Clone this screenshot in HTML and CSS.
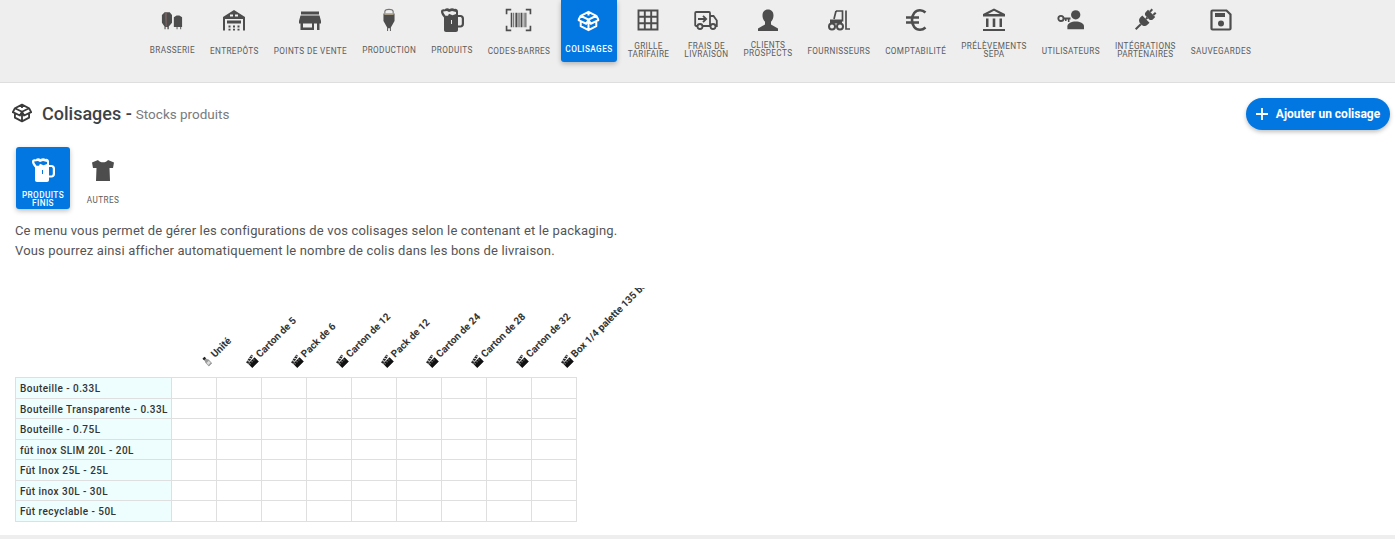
FILE: index.html
```html
<!DOCTYPE html>
<html lang="fr">
<head>
<meta charset="utf-8">
<title>Colisages</title>
<link rel="stylesheet" href="styles.css">
</head>
<body>
<svg class="defs" width="0" height="0" aria-hidden="true">
  <defs>
    <symbol id="i-box" viewBox="0 0 24 24"><path fill="none" stroke="currentColor" stroke-width="2.200" stroke-linejoin="round" d="M12 2 20.500 6.300 23 11 20.500 12.200V17.600L12 22 3.500 17.600V12.200L1 11 3.500 6.300ZM3.500 6.300 12 10.500 20.500 6.300M12 10.500V22M12 2V6M3.500 12.200 9.500 15 12 10.500 14.500 15 20.500 12.200"/></symbol>
    <symbol id="i-mug" viewBox="0 0 24 24"><path fill="currentColor" fill-rule="evenodd" d="M1 3.500C1 1.500 3 1 4.500 1.500 6 0 8 0 9.500 1 11-.2 13.500 0 14.500 1 16 .5 18 1.500 18 3.500V7h2.500C22.500 7 24 8.500 24 10.500V16c0 2-1.500 3.500-3.500 3.500H18V22c0 1-.8 2-2 2H6c-1.200 0-2-1-2-2V9.500L2.800 8C1.800 6.800 1 5 1 3.500ZM18 9v8.500h2c1 0 1.800-.8 1.800-1.800v-5c0-1-.8-1.700-1.800-1.700ZM3.200 3.500 3.600 5 5.500 7.800H8L9 5.800 12.500 7.200 16 6V4L12 3 9 4 7 3ZM11 12h1v4h-1Z"/></symbol>
    <symbol id="i-clap" viewBox="0 0 12 12"><path fill="#111" d="M1 5h10v6.500H1z"/><path fill="#222" d="M.5 2.300 10.500.3 11 3 1 5z"/><path fill="#eee" d="M2.500 2 3.700 4.400 4.700 4.200 3.500 1.800zM5.500 1.400 6.700 3.800 7.700 3.600 6.500 1.200zM8.500.8 9.700 3.200 10.500 3 9.400.6z"/><path fill="#eee" d="M2 6h1v1H2zM5 6h1v1H5zM8 6h1v1H8z"/></symbol>
    <symbol id="i-bottle" viewBox="0 0 12 12"><path fill="#999" d="M7.500.5h-3v3.500L3.500 6v5.500h5V6L7.500 4z"/><path fill="#222" d="M4.500 .5h3V3h-3z"/><path fill="#ddd" d="M4.300 7h3.400v3H4.300z"/></symbol>
  </defs>
</svg>

<header class="topbar">
  <nav class="nav">
    <a class="nav-item nudge"><svg class="ico ico-sm" viewBox="0 0 24 24"><path fill="currentColor" d="M1 6.500 4 3.500h5.500l2.500 3V15l-3.500 4v3H7v-2.500H5V22H3.800v-3L1 15Z"/><path fill="#8a6d6d" d="M4 3.500h2.500V19H5Z" opacity=".6"/><path fill="currentColor" d="M14 9l3-2 3 0 3 2v10.500h-1V22h-1v-2.500h-3V22h-1v-2.500h-3Z"/></svg><span class="lbl">Brasserie</span></a>
    <a class="nav-item"><svg class="ico" viewBox="0 0 24 24"><path fill="currentColor" fill-rule="evenodd" d="M1 9 12 2l11 7v13.500h-2V11H3v11.500H1ZM8 6.500v2h3v-2ZM13 6.500v2h3v-2ZM5 12.500h14v3H5ZM6.500 17.500h2v2h-2ZM11 17.500h2v2h-2ZM15.500 17.500h2v2h-2ZM6.500 20.800h2v1.700h-2ZM11 20.800h2v1.700h-2ZM15.500 20.800h2v1.700h-2Z"/></svg><span class="lbl">Entrepôts</span></a>
    <a class="nav-item"><svg class="ico" viewBox="0 0 24 24"><path fill="currentColor" d="M3 3.500h18v3H3ZM2.500 7.500h19L23 13v2.500h-1.500V22H2.500v-6.500H1V13ZM5 15.500V19.500h9v-4Z M16 15.500V22h3v-6.500Z" fill-rule="evenodd"/></svg><span class="lbl">Points de vente</span></a>
    <a class="nav-item nudge"><svg class="ico ico-tall" viewBox="0 0 16 26"><path fill="none" stroke="#777" stroke-width="1.200" d="M3.500 6V3.500C4 2 6 1.500 8 1.500s4 .5 4.500 2V6"/><path fill="currentColor" d="M2 6h12v8l-4 7v4H9v-3H7v3H6v-4l-4-7Z"/><path fill="#d8c8a8" d="M3 6h10v1.200H3Z"/></svg><span class="lbl">Production</span></a>
    <a class="nav-item nudge"><svg class="ico ico-mug" viewBox="0 0 24 24"><use href="#i-mug"/></svg><span class="lbl">Produits</span></a>
    <a class="nav-item"><svg class="ico ico-wide" viewBox="0 0 26 22"><path fill="none" stroke="currentColor" stroke-width="1.600" d="M6 1H1.500v4.500M20 1h4.500v4.500M6 21H1.500v-4.500M20 21h4.500v-4.500"/><path fill="currentColor" d="M5.500 4h1.500v14H5.500ZM8 4h.8v14H8ZM10 4h2v14h-2ZM13 4h1v14h-1ZM15 4h1.800v14H15ZM18 4h.8v14H18ZM19.600 4h1v14h-1Z"/></svg><span class="lbl">Codes-barres</span></a>
    <a class="nav-item active"><svg class="ico ico-box" viewBox="0 0 24 24"><use href="#i-box"/></svg><span class="lbl">Colisages</span></a>
    <a class="nav-item"><svg class="ico" viewBox="0 0 24 24"><path fill="none" stroke="currentColor" stroke-width="1.900" d="M2.500 2.500h19v19h-19ZM2.500 8.800h19M2.500 15.200h19M8.800 2.500v19M15.200 2.500v19"/></svg><span class="lbl lbl-2">Grille<br>tarifaire</span></a>
    <a class="nav-item"><svg class="ico" viewBox="0 0 24 24"><path fill="none" stroke="currentColor" stroke-width="1.800" d="M3.500 18H2.200c-.6 0-1-.4-1-1V5c0-.6.400-1 1-1H15c.6 0 1 .4 1 1v13H8.500M16 8h3.500l3.300 4.500V18h-1.300M16 18h1"/><circle cx="6" cy="18.500" r="2.500" fill="none" stroke="currentColor" stroke-width="1.800"/><circle cx="19" cy="18.500" r="2.500" fill="none" stroke="currentColor" stroke-width="1.800"/><path fill="none" stroke="currentColor" stroke-width="1.800" d="M4 11h8M9 7.800 12.200 11 9 14.200"/></svg><span class="lbl lbl-2">Frais de<br>livraison</span></a>
    <a class="nav-item"><svg class="ico" viewBox="0 0 24 24"><path fill="currentColor" d="M12 1.500c3.500 0 5.500 2.500 5.500 6 0 2.500-1 4.800-2.500 6.200v2.800l7 4V23H2v-2.500l7-4v-2.800C7.500 12.300 6.500 10 6.500 7.500c0-3.500 2-6 5.500-6Z"/></svg><span class="lbl lbl-2 lbl-up">Clients<br>prospects</span></a>
    <a class="nav-item"><svg class="ico" viewBox="0 0 24 24"><path fill="none" stroke="currentColor" stroke-width="1.700" d="M19 2.500V21h4M9 3h6.500v10.500M9 3 7 11"/><path fill="currentColor" d="M3 11.500h12v4H3Z"/><circle cx="5" cy="18.500" r="3" fill="none" stroke="currentColor" stroke-width="2"/><circle cx="13" cy="18.500" r="3" fill="none" stroke="currentColor" stroke-width="2"/></svg><span class="lbl">Fournisseurs</span></a>
    <a class="nav-item"><svg class="ico" viewBox="0 0 24 24"><path fill="none" stroke="currentColor" stroke-width="2.600" d="M21.500 4.500C19.800 3 18 2.300 16 2.300c-4.800 0-8 4-8 9.700s3.200 9.700 8 9.700c2 0 3.800-.7 5.500-2.200M2 9.500h13M2 14.500h13"/></svg><span class="lbl">Comptabilité</span></a>
    <a class="nav-item"><svg class="ico" viewBox="0 0 24 24"><path fill="currentColor" fill-rule="evenodd" d="M12 .5 23 6v2.500H1V6ZM12 2.800 6 6h12ZM4 10.500h2.500v8.500H4ZM10.700 10.500h2.600v8.500h-2.600ZM17.500 10.500H20v8.500h-2.500ZM1 21h22v2H1Z"/></svg><span class="lbl lbl-2">Prélèvements<br>SEPA</span></a>
    <a class="nav-item"><svg class="ico ico-wide" viewBox="0 0 26 22"><circle cx="18" cy="6" r="4.500" fill="currentColor"/><path fill="currentColor" d="M10 20v-3c0-2.500 4-4.500 8-4.500s8 2 8 4.500v3Z"/><circle cx="3.800" cy="9.500" r="2.500" fill="none" stroke="currentColor" stroke-width="1.800"/><path fill="currentColor" d="M6 8.500h7v2h-1v2.500h-1.500v-2.500H9.200v1.500H7.700v-1.500H6Z"/></svg><span class="lbl">Utilisateurs</span></a>
    <a class="nav-item"><svg class="ico ico-plug" viewBox="0 0 24 24"><g fill="currentColor" transform="rotate(45 12 12) translate(12 12) scale(.85) translate(-12 -12)"><rect x="8" y="-3" width="2.400" height="4"/><rect x="13.600" y="-3" width="2.400" height="4"/><path d="M6 1h12v4c0 2-2 3-3 3H9C8 8 6 7 6 5Z"/><rect x="10.800" y="8" width="2.400" height="2.500"/><path d="M6 10.500h12V14c0 3-2.500 5-6 5s-6-2-6-5Z"/><rect x="10.800" y="19" width="2.400" height="8.500"/></g></svg><span class="lbl lbl-2">Intégrations<br>partenaires</span></a>
    <a class="nav-item"><svg class="ico" viewBox="0 0 24 24"><path fill="none" stroke="currentColor" stroke-width="2.200" d="M3.500 2.500h14l4 4v14c0 .6-.4 1-1 1h-17c-.6 0-1-.4-1-1v-17c0-.6.400-1 1-1Z"/><path fill="currentColor" d="M6 5h10v4H6Z"/><circle cx="12" cy="15.500" r="3" fill="currentColor"/></svg><span class="lbl">Sauvegardes</span></a>
  </nav>
</header>

<main class="main">
  <div class="title-row">
    <h1 class="title"><svg class="title-ico" viewBox="0 0 24 24"><use href="#i-box"/></svg><span class="title-main">Colisages -</span><span class="title-sub">Stocks produits</span></h1>
    <button class="add-btn"><svg class="plus" viewBox="0 0 12 12"><path fill="none" stroke="currentColor" stroke-width="1.800" d="M6 0v12M0 6h12"/></svg>Ajouter un colisage</button>
  </div>

  <div class="tabs">
    <a class="tab active"><svg class="tab-ico" viewBox="0 0 24 24"><use href="#i-mug"/></svg><span class="tab-lbl">Produits<br>finis</span></a>
    <a class="tab"><svg class="tab-ico" viewBox="0 0 24 24"><path fill="currentColor" d="M7 2 1 4.500 2 10h3.500L5 23h14l-.5-13H22l1-5.500L17 2c-1 1.500-3 2.300-5 2.300S8 3.500 7 2Z"/></svg><span class="tab-lbl">Autres</span></a>
  </div>

  <p class="intro">Ce menu vous permet de gérer les configurations de vos colisages selon le contenant et le packaging.<br>Vous pourrez ainsi afficher automatiquement le nombre de colis dans les bons de livraison.</p>

  <div class="table-wrap">
    <table class="grid">
      <thead>
        <tr>
          <th class="corner"></th>
          <th class="rot"><span><svg viewBox="0 0 12 12"><use href="#i-bottle"/></svg> Unité</span></th>
          <th class="rot"><span><svg viewBox="0 0 12 12"><use href="#i-clap"/></svg> Carton de 5</span></th>
          <th class="rot"><span><svg viewBox="0 0 12 12"><use href="#i-clap"/></svg> Pack de 6</span></th>
          <th class="rot"><span><svg viewBox="0 0 12 12"><use href="#i-clap"/></svg> Carton de 12</span></th>
          <th class="rot"><span><svg viewBox="0 0 12 12"><use href="#i-clap"/></svg> Pack de 12</span></th>
          <th class="rot"><span><svg viewBox="0 0 12 12"><use href="#i-clap"/></svg> Carton de 24</span></th>
          <th class="rot"><span><svg viewBox="0 0 12 12"><use href="#i-clap"/></svg> Carton de 28</span></th>
          <th class="rot"><span><svg viewBox="0 0 12 12"><use href="#i-clap"/></svg> Carton de 32</span></th>
          <th class="rot"><span><svg viewBox="0 0 12 12"><use href="#i-clap"/></svg> Box 1/4 palette 135 bouteilles</span></th>
        </tr>
      </thead>
      <tbody>
        <tr><th>Bouteille - 0.33L</th><td></td><td></td><td></td><td></td><td></td><td></td><td></td><td></td><td></td></tr>
        <tr><th>Bouteille Transparente - 0.33L</th><td></td><td></td><td></td><td></td><td></td><td></td><td></td><td></td><td></td></tr>
        <tr><th>Bouteille - 0.75L</th><td></td><td></td><td></td><td></td><td></td><td></td><td></td><td></td><td></td></tr>
        <tr><th>fût inox SLIM 20L - 20L</th><td></td><td></td><td></td><td></td><td></td><td></td><td></td><td></td><td></td></tr>
        <tr><th>Fût Inox 25L - 25L</th><td></td><td></td><td></td><td></td><td></td><td></td><td></td><td></td><td></td></tr>
        <tr><th>Fût inox 30L - 30L</th><td></td><td></td><td></td><td></td><td></td><td></td><td></td><td></td><td></td></tr>
        <tr><th>Fût recyclable - 50L</th><td></td><td></td><td></td><td></td><td></td><td></td><td></td><td></td><td></td></tr>
      </tbody>
    </table>
  </div>
</main>
<div class="foot"></div>
</body>
</html>
```
FILE: styles.css
```css
* { box-sizing: border-box; }
html, body { margin: 0; padding: 0; }
body {
  width: 1395px;
  height: 539px;
  overflow: hidden;
  background: #fff;
  font-family: Roboto, "Liberation Sans", sans-serif;
  color: #4d4d4d;
  display: flex;
  flex-direction: column;
}
.defs { position: absolute; }

.topbar {
  height: 83px;
  flex: none;
  background: #eeeeee;
  border-bottom: 1px solid #dedede;
}
.nav {
  display: flex;
  justify-content: center;
  align-items: flex-start;
  gap: 7px;
  margin-left: 6px;
}
.nav-item {
  height: 62px;
  padding: 8px 4px 0;
  display: flex;
  flex-direction: column;
  align-items: center;
  color: #4d4d4d;
  border-radius: 0 0 3px 3px;
}
.nav-item.active {
  background: #0277e2;
  color: #fff;
  box-shadow: 0 2px 5px rgba(0, 0, 0, .25);
}
.ico {
  width: 24px;
  height: 24px;
  flex: none;
  color: #4d4d4d;
}
.nav-item.active .ico { color: #fff; }
.ico-sm { width: 22px; }
.ico-tall { width: 16px; }
.ico-wide { width: 27px; }
.ico-box { width: 23px; height: 22px; margin: 2px 0 0; }
.lbl {
  margin-top: 9px;
  height: 20px;
  display: flex;
  align-items: center;
  justify-content: center;
  text-align: center;
  font-size: 8.2px;
  line-height: 8px;
  letter-spacing: .38px;
  text-transform: uppercase;
  color: #5c5c5c;
  white-space: nowrap;
}
.lbl-2 { margin-top: 8px; }
.nudge .lbl { margin-top: 8px; }
.lbl-up { margin-top: 7px; }
.active .lbl { color: #fff; font-weight: 500; letter-spacing: .45px; margin-top: 7px; }

.main { flex: 1; padding: 0 5px 0 15px; }
.title-row {
  display: flex;
  justify-content: space-between;
  align-items: center;
  margin: 15px 0 0 -3px;
  height: 32px;
}
.title { margin: 0 0 2px; display: flex; align-items: center; font-weight: 400; }
.title-ico { width: 20px; height: 20px; color: #3a3a3a; margin-right: 10px; }
.title-main { font-size: 18px; font-weight: 500; color: #3c4248; }
.title-sub { font-size: 13.5px; color: #777c80; margin-left: 4px; margin-top: 2px; }
.add-btn {
  height: 32px;
  width: 144px;
  border: 0;
  border-radius: 16px;
  background: #0277e2;
  color: #fff;
  font: 700 12px Roboto, sans-serif;
  display: flex;
  align-items: center;
  justify-content: center;
  gap: 8px;
  padding: 0;
  white-space: nowrap;
  box-shadow: 0 2px 4px rgba(0, 0, 0, .25);
}
.plus { width: 12px; height: 12px; }

.tabs { display: flex; gap: 6px; margin: 17px 0 0 1px; }
.tab {
  width: 54px;
  height: 62px;
  display: flex;
  flex-direction: column;
  align-items: center;
  padding-top: 11px;
  border-radius: 3px;
  color: #4d4d4d;
}
.tab.active { background: #0277e2; color: #fff; box-shadow: 0 2px 5px rgba(0, 0, 0, .25); }
.tab-ico { width: 24px; height: 24px; flex: none; }
.tab-lbl {
  margin-top: 8px;
  height: 20px;
  display: flex;
  align-items: center;
  text-align: center;
  font-size: 8.2px;
  line-height: 8px;
  letter-spacing: .42px;
  text-transform: uppercase;
  color: #5c5c5c;
}
.tab.active .tab-lbl { font-weight: 500; margin-top: 7px; color: #fff; }

.intro {
  margin: 12px 0 0;
  font-size: 13px;
  line-height: 20.3px;
  letter-spacing: .16px;
  color: #555;
}

.table-wrap { margin-top: 26.4px; height: 235px; overflow: hidden; }
.grid { border-collapse: collapse; table-layout: fixed; width: 562px; }
.grid th, .grid td { border: 1px solid #dfdfdf; padding: 0; }
.grid thead th { border: 0; border-bottom: 1px solid #dfdfdf; height: 90px; }
.corner { width: 156px; }
.rot { width: 45px; position: relative; }
.rot span {
  position: absolute;
  left: 35px;
  bottom: 8px;
  white-space: nowrap;
  transform-origin: 0 100%;
  transform: rotate(-45deg);
  font-size: 10px;
  font-weight: 700;
  letter-spacing: 0;
  color: #333;
}
.rot svg { width: 11px; height: 11px; vertical-align: -2px; }
.grid tbody th {
  text-align: left;
  background: #eefefe;
  font-size: 10px;
  font-weight: 500;
  letter-spacing: .45px;
  color: #333;
  padding: 1px 0 0 4px;
  white-space: nowrap;
}
.grid tbody tr { height: 20.5px; }

.foot { height: 4px; flex: none; background: #eeeeee; }
```
